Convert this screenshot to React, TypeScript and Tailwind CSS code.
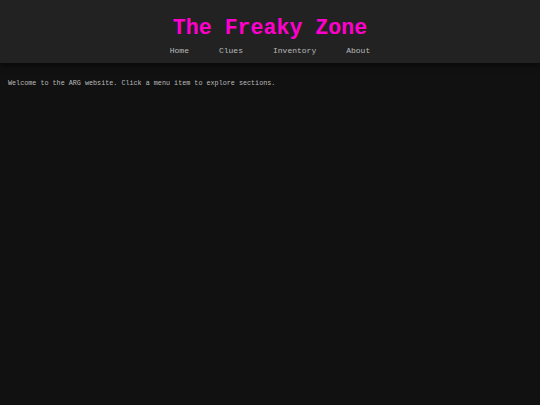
import React from "react";

export default function App() {
  const items = ["Home", "Clues", "Inventory", "About"];
  return (
    <div className="min-h-[405px] bg-[#111111] text-[#cccccc]" style={{ fontFamily: '"Liberation Mono", "Courier New", monospace' }}>
      <header className="h-[63px] bg-[#222222] shadow-[0_2px_6px_rgba(0,0,0,0.6)] flex flex-col items-center pt-[15px]">
        <h1 className="text-[21.6px] leading-[26px] font-bold text-[#ff00cc]">The Freaky Zone</h1>
        <nav className="flex gap-[30px] mt-[5px] text-[8px] leading-[10px] text-[#bbbbbb]">
          {items.map((i) => (
            <span key={i}>{i}</span>
          ))}
        </nav>
      </header>
      <main className="px-[8px] pt-[16px] text-[6.75px] leading-[8px] text-[#bbbbbb]">
        Welcome to the ARG website. Click a menu item to explore sections.
      </main>
    </div>
  );
}
